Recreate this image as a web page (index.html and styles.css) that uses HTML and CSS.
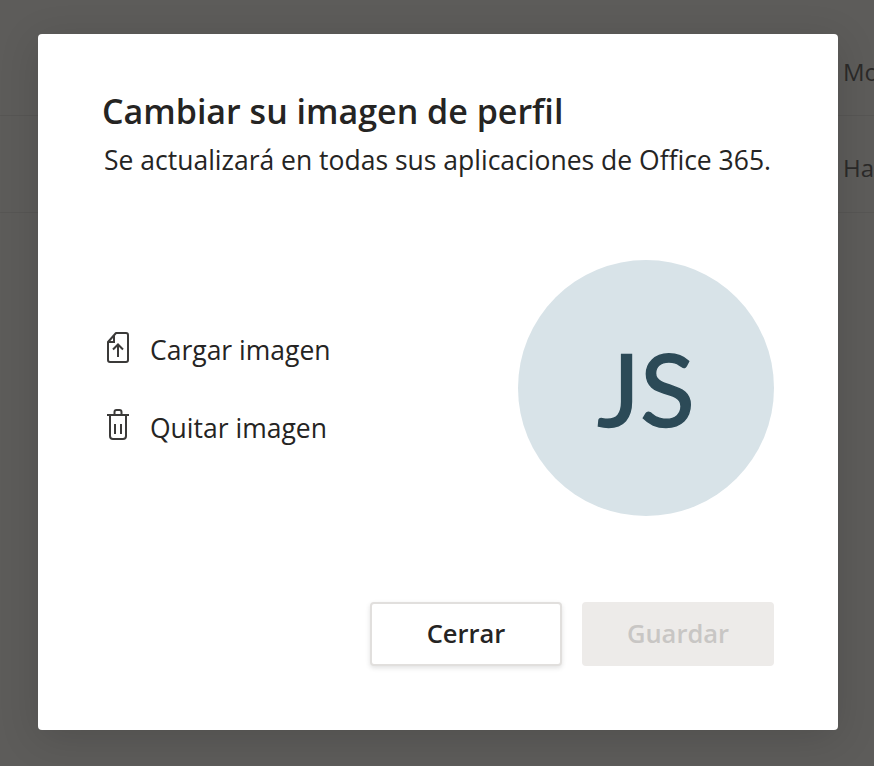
FILE: index.html
```html
<!DOCTYPE html>
<html lang="es">

<head>
	<meta charset="UTF-8">
	<meta name="viewport" content="width=device-width, initial-scale=1.0">
	<title>Cambiar su imagen de perfil</title>
	<link rel="stylesheet" href="styles.css">
</head>

<body>
	<div class="people-list">
		<div class="people-row people-row-first">Mo</div>
		<div class="people-row">Ha</div>
	</div>

	<div class="overlay">
		<div class="dialog">
			<h1 class="dialog-title">Cambiar su imagen de perfil</h1>
			<p class="dialog-subtitle">Se actualizará en todas sus aplicaciones de Office 365.</p>

			<div class="dialog-body">
				<div class="photo-actions">
					<div class="photo-action">
						<svg class="action-icon" width="26" height="36" viewBox="0 0 26 36" fill="none" stroke="#3b3a39" stroke-width="2">
							<path d="M11 1H21a2 2 0 0 1 2 2V28a2 2 0 0 1-2 2H5a2 2 0 0 1-2-2V10z" stroke-linejoin="round" />
							<path d="M9 3V10H3.500" />
							<path d="M13 25V12.500M8 17.500L13 12.500l5 5" />
						</svg>
						<span>Cargar imagen</span>
					</div>
					<div class="photo-action">
						<svg class="action-icon" width="26" height="36" viewBox="0 0 26 36" fill="none" stroke="#3b3a39" stroke-width="2">
							<path d="M2 5H24" />
							<path d="M9.500 4.500V2a2 2 0 0 1 2-2h3a2 2 0 0 1 2 2v2.500" />
							<path d="M5 5V26a3 3 0 0 0 3 3h10a3 3 0 0 0 3-3V5" />
							<path d="M10 14V24M16 14V24" />
						</svg>
						<span>Quitar imagen</span>
					</div>
				</div>
				<div class="avatar">JS</div>
			</div>

			<div class="dialog-footer">
				<button class="btn">Cerrar</button>
				<button class="btn btn-disabled" disabled>Guardar</button>
			</div>
		</div>
	</div>
</body>

</html>
```

FILE: styles.css
```css
html,
body {
	height: 100%;
}

body {
	margin: 0;
	overflow: hidden;
	background-color: #5d5c5a;
	font-family: "Open Sans", "Noto Sans", sans-serif;
	color: #252423;
}

/* Page behind the dialog */
.people-row {
	box-sizing: border-box;
	height: 97px;
	padding: 36px 0 0 843px;
	border-bottom: 1px solid #575654;
	font-size: 24px;
	line-height: 32px;
	color: #2b2a29;
	white-space: nowrap;
}

.people-row-first {
	height: 116px;
	padding-top: 56px;
}

/* Dialog */
.overlay {
	position: absolute;
	top: 0;
	left: 0;
	right: 0;
	bottom: 0;
	box-sizing: border-box;
	padding: 34px 36px 36px 38px;
}

.dialog {
	box-sizing: border-box;
	height: 100%;
	padding: 55px 64px 64px;
	background-color: #fff;
	border-radius: 4px;
	box-shadow: 0 8px 40px rgba(0, 0, 0, 0.14);
	display: flex;
	flex-direction: column;
}

.dialog-title {
	margin: 0;
	font-size: 34px;
	line-height: 44px;
	font-weight: 600;
}

.dialog-subtitle {
	margin: 9px 0 0 2px;
	font-size: 26.500px;
	line-height: 36px;
}

.dialog-body {
	margin-top: 82px;
	display: flex;
	justify-content: space-between;
	align-items: center;
}

.photo-actions {
	display: flex;
	flex-direction: column;
	gap: 42px;
	margin-top: 2px;
}

.photo-action {
	display: flex;
	align-items: center;
	gap: 19px;
	margin-left: 3px;
	font-size: 26.500px;
	line-height: 36px;
}

.action-icon {
	display: block;
	overflow: visible;
}

.avatar {
	width: 256px;
	height: 256px;
	border-radius: 50%;
	background-color: #d8e3e8;
	color: #2c4a57;
	font-family: Lato, "Open Sans", sans-serif;
	font-size: 101px;
	-webkit-text-stroke: 1.500px #2c4a57;
	display: flex;
	align-items: center;
	justify-content: center;
}

.dialog-footer {
	margin-top: auto;
	display: flex;
	justify-content: flex-end;
	gap: 20px;
}

/* Buttons */
.btn {
	box-sizing: border-box;
	width: 192px;
	height: 64px;
	padding: 0 0 2px;
	background-color: #fff;
	border: 2px solid #e1dfdd;
	border-radius: 4px;
	box-shadow: 0 2px 5px rgba(0, 0, 0, 0.12);
	color: #252423;
	font-family: inherit;
	font-size: 25.500px;
	font-weight: 600;
}

.btn-disabled {
	background-color: #edebe9;
	border-color: #edebe9;
	box-shadow: none;
	color: #c8c6c4;
}
```
